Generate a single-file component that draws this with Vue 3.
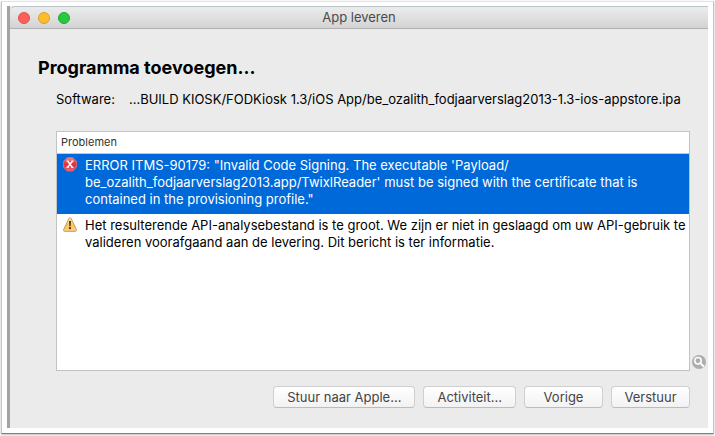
<script setup>
import { ref } from "vue";

const software = ref(
  "...BUILD KIOSK/FODKiosk 1.3/iOS App/be_ozalith_fodjaarverslag2013-1.3-ios-appstore.ipa"
);

// \u200b lets the long path wrap after its slash
const problems = ref([
  {
    type: "error",
    text: "ERROR ITMS-90179: \"Invalid Code Signing. The executable 'Payload/\u200bbe_ozalith_fodjaarverslag2013.app/TwixlReader' must be signed with the certificate that is contained in the provisioning profile.\"",
  },
  {
    type: "warning",
    text: "Het resulterende API-analysebestand is te groot. We zijn er niet in geslaagd om uw API-gebruik te valideren voorafgaand aan de levering. Dit bericht is ter informatie.",
  },
]);

const selected = ref(0);
</script>

<template>
  <div class="frame">
    <div class="desktop">
      <main class="window">
        <header class="titlebar">
          <div class="lights">
            <button class="light close" aria-label="Sluit"></button>
            <button class="light minimize" aria-label="Minimaliseer"></button>
            <button class="light zoom" aria-label="Vergroot"></button>
          </div>
          <span class="title">App leveren</span>
        </header>

        <section class="content">
          <h1>Programma toevoegen...</h1>

          <div class="software">
            <span>Software:</span>
            <span class="path">{{ software }}</span>
          </div>

          <div class="list-row">
            <div class="list">
              <table>
                <thead>
                  <tr>
                    <th colspan="2">Problemen</th>
                  </tr>
                </thead>
                <tbody>
                  <tr
                    v-for="(problem, index) in problems"
                    :key="index"
                    :class="{ selected: selected == index }"
                    @click="selected = index"
                  >
                    <td class="icon">
                      <svg
                        v-if="problem.type == 'error'"
                        width="14"
                        height="15"
                        viewBox="0 0 14 15"
                      >
                        <defs>
                          <linearGradient id="red" x1="0" y1="0" x2="0" y2="1">
                            <stop offset="0" stop-color="#ee8a92" />
                            <stop offset="0.5" stop-color="#d92f3d" />
                            <stop offset="1" stop-color="#f4636a" />
                          </linearGradient>
                        </defs>
                        <path
                          d="M4.2 0.5h5.6l3.7 3.8v5.9l-3.7 3.8H4.2L0.5 10.2V4.3z"
                          fill="url(#red)"
                          stroke="#cf6578"
                        />
                        <path
                          d="M4.6 4l4.8 6.5M9.6 4l-5.2 6.5"
                          stroke="#fff"
                          stroke-width="1.4"
                          fill="none"
                        />
                        <path
                          d="M3.4 4h2.4M8.4 4h2.2M3.4 10.5h2.2M8.2 10.5h2.4"
                          stroke="#fff"
                          stroke-width="0.8"
                        />
                      </svg>
                      <svg v-else width="14" height="15" viewBox="0 0 14 15">
                        <defs>
                          <linearGradient id="amber" x1="0" y1="0" x2="0" y2="1">
                            <stop offset="0" stop-color="#fff0c4" />
                            <stop offset="0.6" stop-color="#fbc35a" />
                            <stop offset="1" stop-color="#fbd48a" />
                          </linearGradient>
                        </defs>
                        <path
                          d="M7 0.7c.5 0 .8.3 1 .7l5.3 11c.5 1 .1 1.9-.9 1.9H1.6c-1 0-1.4-.9-.9-1.9L6 1.4c.2-.4.5-.7 1-.7z"
                          fill="url(#amber)"
                          stroke="#c39a5c"
                        />
                        <path d="M6 4h2l-.4 5.2H6.4z" fill="#4a3014" />
                        <circle cx="7" cy="11.2" r="1.1" fill="#4a3014" />
                      </svg>
                    </td>
                    <td class="message">{{ problem.text }}</td>
                  </tr>
                </tbody>
              </table>
            </div>
            <button class="inspect" aria-label="Zoek">
              <svg width="14" height="14" viewBox="0 0 14 14">
                <circle cx="7" cy="7" r="7" fill="#aeaeae" />
                <circle
                  cx="6"
                  cy="5.8"
                  r="3.2"
                  fill="none"
                  stroke="#fff"
                  stroke-width="1.5"
                />
                <path
                  d="M8.4 8.2l2.8 2.8"
                  stroke="#fff"
                  stroke-width="1.9"
                  stroke-linecap="round"
                />
              </svg>
            </button>
          </div>

          <footer class="actions">
            <button class="action">Stuur naar Apple...</button>
            <button class="action">Activiteit...</button>
            <button class="action wide">Vorige</button>
            <button class="action wide">Verstuur</button>
          </footer>
        </section>
      </main>
    </div>
  </div>
</template>

<style>
body {
  background: #fff;
}
</style>

<style scoped>
* {
  box-sizing: border-box;
}

.frame {
  display: flex;
  min-height: 100vh;
  padding: 1px 1px 2px;
  font-family: Inter, "Liberation Sans", sans-serif;
  font-size: 13px;
  line-height: 17px;
  color: #000;
}

.desktop {
  flex: 1;
  display: flex;
  padding: 4px 5px 5px;
  border: 1px solid #c4c4c4;
  border-top-color: #e2e2e2;
  border-bottom-color: #808080;
  box-shadow: 0 1px 2px #bbb;
}

.window {
  flex: 1;
  display: flex;
  flex-direction: column;
  background: #ebebeb;
  border-left: 3px solid #a3a3a3;
}

.titlebar {
  position: relative;
  display: flex;
  align-items: center;
  justify-content: center;
  height: 23px;
  background: linear-gradient(#ececec, #d3d3d3);
  border-top: 1px solid #b9c2c7;
  border-bottom: 1px solid #b1b1b1;
  border-top-left-radius: 5px;
}

.lights {
  position: absolute;
  left: 8px;
  display: flex;
  gap: 8px;
}

.light {
  width: 12px;
  height: 12px;
  padding: 0;
  border: 1px solid;
  border-radius: 50%;
}

.close {
  background: #fc605b;
  border-color: #e0504b;
}

.minimize {
  background: #fdbc2e;
  border-color: #dfa023;
}

.zoom {
  background: #28c940;
  border-color: #1eaa30;
}

.title {
  color: #4a4a4a;
}

.content {
  flex: 1;
  display: flex;
  flex-direction: column;
  padding: 28px 2px 20px 28px;
}

h1 {
  margin: 0;
  font-size: 18px;
  line-height: 22px;
  font-weight: 700;
}

.software {
  display: flex;
  gap: 14px;
  margin: 12px 0 23px;
  padding-left: 18px;
}

.path {
  white-space: nowrap;
}

.list-row {
  flex: 1;
  display: flex;
  align-items: flex-end;
  padding-left: 18px;
}

.list {
  flex: 1;
  align-self: stretch;
  background: #fff;
  border: 1px solid #c3c3c3;
}

table {
  width: 100%;
  border-collapse: collapse;
}

th {
  padding: 2px 4px;
  border-bottom: 1px solid #c8c8c8;
  color: #333;
  font-size: 11px;
  font-weight: 400;
  text-align: left;
}

td {
  padding: 3px 0 6px;
  vertical-align: top;
}

.icon {
  width: 28px;
  padding-left: 6px;
}

.icon svg {
  display: block;
}

.message {
  padding-right: 2px;
}

.selected {
  background: #0069d9;
  color: #fff;
}

.inspect {
  padding: 0;
  margin-left: 2px;
  margin-bottom: 2px;
  border: none;
  background: none;
}

.inspect svg {
  display: block;
}

.actions {
  display: flex;
  justify-content: flex-end;
  gap: 8px;
  margin-top: 15px;
  padding-right: 16px;
}

.action {
  height: 22px;
  padding: 0 13px;
  border: 1px solid #cfcfcf;
  border-bottom-color: #bcbcbc;
  border-radius: 4px;
  background: linear-gradient(#fff, #f2f2f2);
  color: #444;
  font-family: inherit;
  font-size: 13px;
}

.wide {
  width: 79px;
  padding: 0;
}
</style>
